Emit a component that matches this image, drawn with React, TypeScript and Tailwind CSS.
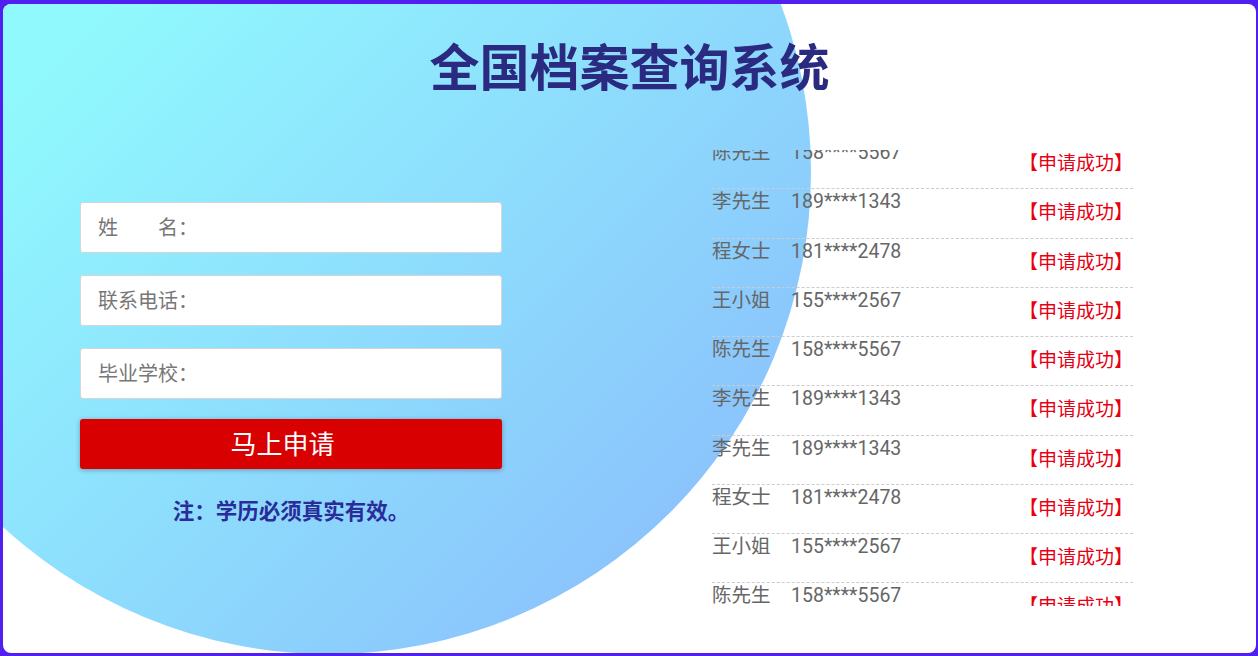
import React from "react";

interface Record {
  name: string;
  phone: string;
}

const records: Record[] = [
  { name: "陈先生", phone: "158****5567" },
  { name: "李先生", phone: "189****1343" },
  { name: "程女士", phone: "181****2478" },
  { name: "王小姐", phone: "155****2567" },
  { name: "陈先生", phone: "158****5567" },
  { name: "李先生", phone: "189****1343" },
  { name: "李先生", phone: "189****1343" },
  { name: "程女士", phone: "181****2478" },
  { name: "王小姐", phone: "155****2567" },
  { name: "陈先生", phone: "158****5567" },
];

const fields = ["姓\u3000\u3000名：", "联系电话：", "毕业学校："];

const App = () => {
  return (
    <div
      className="w-full h-[656px] bg-[#5120f0] pt-[4px] pl-[3px] pr-[2px] pb-[3px]"
      style={{ fontFamily: '"Noto Sans", "Noto Sans CJK SC", sans-serif' }}
    >
      <div className="relative h-full bg-white rounded-[8px] overflow-hidden">
        {/* background bubble */}
        <div className="absolute left-[-156px] top-[-314px] w-[964px] h-[964px] rounded-full bg-linear-to-br from-[#90f9fd] from-30% to-[#89b6fb]" />

        <div className="relative">
          <h1 className="pt-[33px] mb-[53px] text-center text-[50px] leading-[60px] font-bold text-[#2a2a80]">
            全国档案查询系统
          </h1>

          <div className="flex items-start pl-[77px]">
            {/* form */}
            <div className="w-[422px] pt-[52px]">
              <div className="flex flex-col gap-[22px]">
                {fields.map((f) => (
                  <input
                    key={f}
                    type="text"
                    placeholder={f}
                    className="h-[51px] w-full bg-white border border-[#d6d6d6] rounded-[3px] pl-[17px] text-[20px] text-[#555] placeholder:text-[#777] outline-none"
                  />
                ))}
              </div>
              <button className="mt-[20px] h-[50px] w-full bg-[#d80000] rounded-[3px] pr-[17px] text-white text-[26px] shadow-[0_1px_5px_rgba(0,0,0,0.3)]">
                马上申请
              </button>
              <p className="mt-[27px] text-center text-[21.5px] leading-[30px] font-bold text-[#2a2c9a]">
                注：学历必须真实有效。
              </p>
            </div>

            {/* scrolling list */}
            <div className="ml-[210px] w-[421px] h-[456px] overflow-hidden">
              <ul className="-mt-[10px]">
                {records.map((r, i) => (
                  <li
                    key={i}
                    className="h-[49.25px] flex justify-between border-b border-dashed border-[#cccccc]"
                  >
                    <div className="text-[19.5px] leading-[24px] text-[#666] pt-[1px] font-['Roboto','Noto_Sans_CJK_SC',sans-serif]">
                      <span className="inline-block w-[79px]">{r.name}</span>
                      <span>{r.phone}</span>
                    </div>
                    <div className="text-[19px] leading-[24px] text-[#e60012] pt-[11px]">
                      【申请成功】
                    </div>
                  </li>
                ))}
              </ul>
            </div>
          </div>
        </div>
      </div>
    </div>
  );
};

export default App;
